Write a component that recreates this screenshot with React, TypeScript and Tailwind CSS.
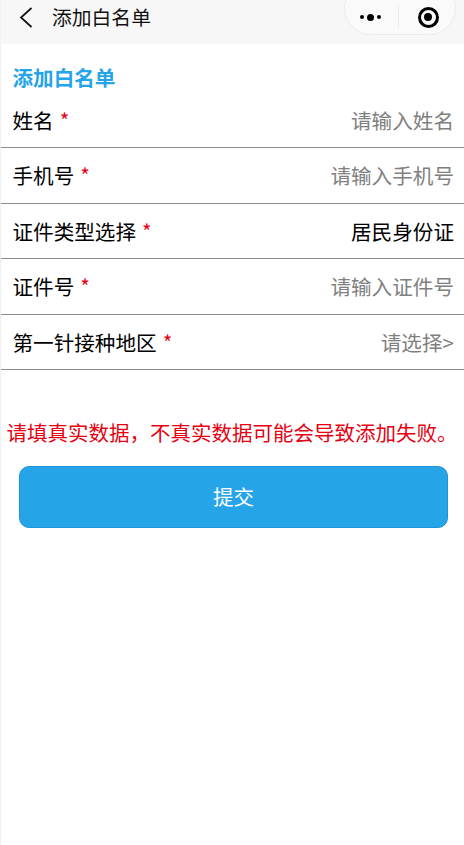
import React from "react";

const rows = [
  { label: "姓名", value: "请输入姓名", dark: false },
  { label: "手机号", value: "请输入手机号", dark: false },
  { label: "证件类型选择", value: "居民身份证", dark: true },
  { label: "证件号", value: "请输入证件号", dark: false },
  { label: "第一针接种地区", value: "请选择>", dark: false },
];

export default function App() {
  return (
    <div className="h-[845px] w-[464px] overflow-hidden bg-white font-['Noto_Sans_CJK_SC','Liberation_Sans',sans-serif] border-l border-[#f2f2f2]">
      {/* nav bar */}
      <div className="flex h-[44px] items-start justify-between overflow-hidden bg-[#f7f7f7] pr-[8px]">
        <div className="flex h-[34px] items-center">
          <svg width="14" height="21" viewBox="0 0 14 21" className="ml-[18px]">
            <path d="M12.5 1 2 10.5 12.5 20" fill="none" stroke="#111" strokeWidth="1.7" />
          </svg>
          <span className="ml-[19px] text-[19.8px] leading-[26px] text-[#111]">添加白名单</span>
        </div>
        <div className="mt-[-18px] flex h-[53px] w-[112px] items-end rounded-[27px] border border-[#ececec] bg-[#fafafa] pb-[5px]">
          <div className="flex h-[24px] w-[54px] items-center justify-center gap-[3px] border-r border-[#ececec] pr-[2px]">
            <span className="h-[4px] w-[4px] rounded-full bg-black" />
            <span className="h-[7px] w-[7px] rounded-full bg-black" />
            <span className="h-[4px] w-[4px] rounded-full bg-black" />
          </div>
          <div className="flex h-[24px] flex-1 items-center justify-center pl-[2px]">
            <div className="flex h-[21px] w-[21px] items-center justify-center rounded-full border-[3px] border-black">
              <span className="h-[8px] w-[8px] rounded-full bg-black" />
            </div>
          </div>
        </div>
      </div>

      {/* form */}
      <div className="pt-[20px]">
        <h1 className="pl-[11.5px] text-[20.6px] font-bold leading-[26px] text-[#25a4e8]">添加白名单</h1>
        <div className="mt-[2.5px]">
          {rows.map((row) => (
            <div key={row.label} className="flex h-[55.5px] items-center justify-between border-b border-[#8c8c8c] pl-[11.5px] pr-[10px]">
              <div className="text-[20.6px] leading-[28px] text-black">
                {row.label}
                <span className="ml-[6px] text-[#e60012]">*</span>
              </div>
              <div className={`text-[20.6px] leading-[28px] ${row.dark ? "text-black" : "text-[#808080]"}`}>{row.value}</div>
            </div>
          ))}
        </div>
      </div>

      {/* notice */}
      <p className="ml-[5.5px] mt-[47.5px] whitespace-nowrap text-[20.5px] leading-[28px] text-[#e60012]">请填真实数据，不真实数据可能会导致添加失败。</p>

      {/* submit */}
      <button className="ml-[18px] mt-[20px] flex h-[62px] w-[429px] items-center justify-center rounded-[10px] border border-[#1f95d8] bg-[#25a4e8] text-[20.6px] text-white">提交</button>
    </div>
  );
}
